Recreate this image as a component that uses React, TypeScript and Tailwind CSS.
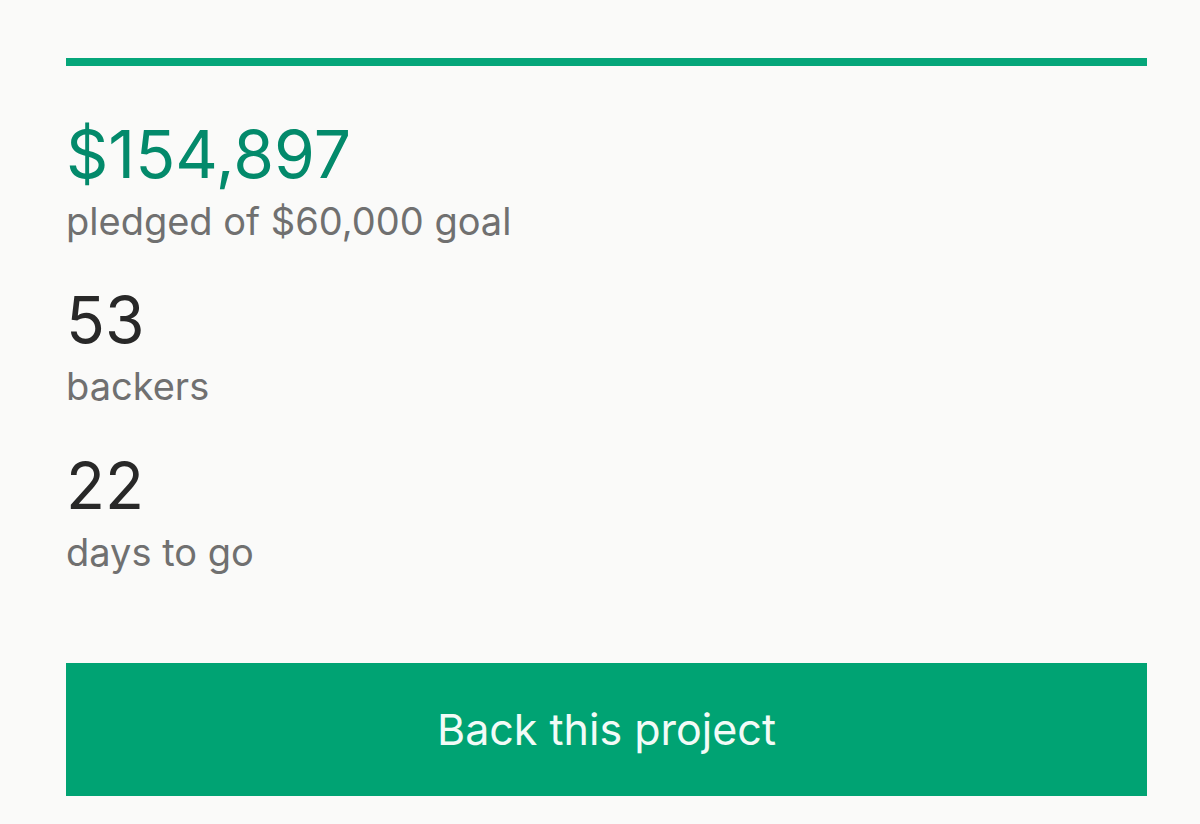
export default function App() {
  return (
    <div className="min-h-[824px] w-full bg-[#fafaf9] pl-[66px] pr-[53px] pt-[58px] font-['Inter','Noto_Sans',sans-serif]">
      {/* progress bar */}
      <div className="h-[8px] w-full bg-[#05a67a]" />

      <div className="mt-[55px] flex flex-col">
        <div className="text-[66px] leading-[66px] text-[#038a6b]">$154,897</div>
        <div className="mt-[14px] text-[38px] leading-[40px] text-[#707070]">pledged of $60,000 goal</div>

        <div className="mt-[47px] text-[64px] leading-[64px] text-[#282828]">53</div>
        <div className="mt-[14px] text-[38px] leading-[40px] text-[#707070]">backers</div>

        <div className="mt-[48px] text-[64px] leading-[64px] text-[#282828]">22</div>
        <div className="mt-[14px] text-[38px] leading-[40px] text-[#707070]">days to go</div>
      </div>

      <button className="mt-[91px] flex h-[133px] w-full items-center justify-center bg-[#00a373] text-[43px] text-[#f2fbf7]">
        Back this project
      </button>
    </div>
  );
}
